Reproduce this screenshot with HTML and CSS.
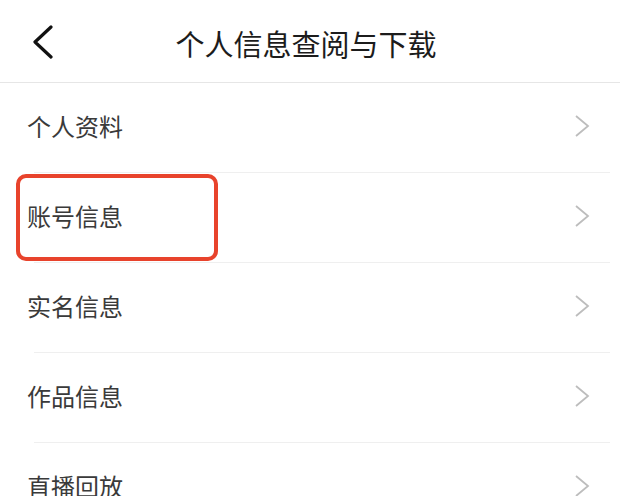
FILE: index.html
```html
<!DOCTYPE html>
<html lang="zh">
<head>
<meta charset="utf-8">
<link rel="stylesheet" href="styles.css">
</head>
<body>
<div class="page">
  <header class="nav">
    <svg class="back" width="24" height="34" viewBox="0 0 24 34"><polyline points="20,2 4,17 20,32" fill="none" stroke="#111" stroke-width="3.2" stroke-linecap="round" stroke-linejoin="round"/></svg>
    <h1 class="title">个人信息查阅与下载</h1>
  </header>
  <ul class="list">
    <li class="row"><span class="label">个人资料</span><svg class="chev" width="16" height="24" viewBox="0 0 16 24"><polyline points="2,2 14,12 2,22" fill="none" stroke="#bdbdbd" stroke-width="1.8"/></svg></li>
    <li class="row"><span class="label">账号信息</span><svg class="chev" width="16" height="24" viewBox="0 0 16 24"><polyline points="2,2 14,12 2,22" fill="none" stroke="#bdbdbd" stroke-width="1.8"/></svg><span class="mark"></span></li>
    <li class="row"><span class="label">实名信息</span><svg class="chev" width="16" height="24" viewBox="0 0 16 24"><polyline points="2,2 14,12 2,22" fill="none" stroke="#bdbdbd" stroke-width="1.8"/></svg></li>
    <li class="row"><span class="label">作品信息</span><svg class="chev" width="16" height="24" viewBox="0 0 16 24"><polyline points="2,2 14,12 2,22" fill="none" stroke="#bdbdbd" stroke-width="1.8"/></svg></li>
    <li class="row"><span class="label">直播回放</span><svg class="chev" width="16" height="24" viewBox="0 0 16 24"><polyline points="2,2 14,12 2,22" fill="none" stroke="#bdbdbd" stroke-width="1.8"/></svg></li>
  </ul>
</div>
</body>
</html>
```
FILE: styles.css
```css
html, body {
  margin: 0;
  padding: 0;
  background: #ffffff;
}
body {
  font-family: "Noto Sans CJK SC", "Noto Sans", sans-serif;
  width: 620px;
  height: 496px;
  overflow: hidden;
}
.page {
  display: flex;
  flex-direction: column;
}
.nav {
  height: 78px;
  padding-top: 4px;
  display: flex;
  align-items: center;
  justify-content: center;
  border-bottom: 1px solid #e6e6e6;
  position: relative;
}
.back {
  position: absolute;
  left: 31px;
  top: 25px;
}
.title {
  margin: 0;
  font-size: 29px;
  font-weight: 400;
  color: #1c1c1c;
  line-height: 1;
  margin-left: -8px;
}
.list {
  list-style: none;
  margin: 0;
  padding: 0;
}
.row {
  height: 85px;
  padding: 0 30px 5px 27px;
  display: flex;
  align-items: center;
  justify-content: space-between;
  background: linear-gradient(#efefef, #efefef) no-repeat 34px 100% / calc(100% - 44px) 1px;
  position: relative;
}
.label {
  font-size: 24px;
  color: #3a3a3a;
  line-height: 1;
}
.chev {
  display: block;
}
.mark {
  position: absolute;
  left: 16px;
  top: 1px;
  width: 202px;
  height: 87px;
  box-sizing: border-box;
  border: 4px solid #e8432c;
  border-radius: 10px;
}
```
